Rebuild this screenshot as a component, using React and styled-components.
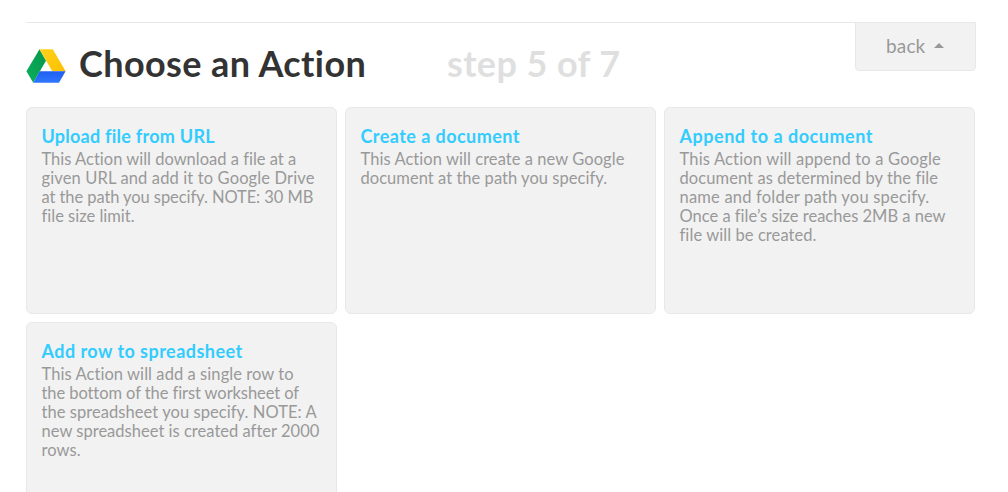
import React from 'react'
import styled, { createGlobalStyle } from 'styled-components'

const actions = [
  {
    title: 'Upload file from URL',
    tracking: 0.25,
    lines: [
      ['This Action will download a file at a', 0],
      ['given URL and add it to Google Drive', 0.13],
      ['at the path you specify. NOTE: 30 MB', -0.08],
      ['file size limit.', 0],
    ],
  },
  {
    title: 'Create a document',
    tracking: 0.44,
    lines: [
      ['This Action will create a new Google', 0.06],
      ['document at the path you specify.', 0.04],
    ],
  },
  {
    title: 'Append to a document',
    tracking: 0.53,
    lines: [
      ['This Action will append to a Google', 0.17],
      ['document as determined by the file', 0.08],
      ['name and folder path you specify.', 0.2],
      ['Once a file’s size reaches 2MB a new', 0],
      ['file will be created.', 0.08],
    ],
  },
  {
    title: 'Add row to spreadsheet',
    tracking: 0.46,
    lines: [
      ['This Action will add a single row to', 0.07],
      ['the bottom of the first worksheet of', -0.08],
      ['the spreadsheet you specify. NOTE: A', 0.06],
      ['new spreadsheet is created after 2000', 0.02],
      ['rows.', 0.1],
    ],
  },
]

function DriveLogo() {
  return (
    <Logo viewBox="0 0 40 34">
      <defs>
        <linearGradient id="green" x1="1" y1="0" x2="0" y2="1">
          <stop offset="0" stopColor="#04964a" />
          <stop offset="1" stopColor="#0cb05c" />
        </linearGradient>
        <linearGradient id="yellow" x1="0" y1="0" x2="1" y2="1">
          <stop offset="0" stopColor="#ffd21c" />
          <stop offset="1" stopColor="#fcc000" />
        </linearGradient>
        <linearGradient id="blue" x1="0" y1="0" x2="0" y2="1">
          <stop offset="0" stopColor="#1f5ff0" />
          <stop offset="1" stopColor="#2f76ff" />
        </linearGradient>
      </defs>
      <path d="M13.5 0.2 L20 11.8 L7.2 33.8 L0.4 22.2 Z" fill="url(#green)" />
      <path d="M13.5 0.2 H26.8 L39.6 22.2 H26.3 Z" fill="url(#yellow)" />
      <path d="M13.8 22.2 H39.6 L33 33.8 H7.2 Z" fill="url(#blue)" />
    </Logo>
  )
}

function App() {
  return (
    <>
      <GlobalStyle />
      <Page>
        <Header>
          <DriveLogo />
          <Heading>Choose an Action</Heading>
          <Step>step 5 of 7</Step>
          <BackButton>
            back
            <Caret />
          </BackButton>
        </Header>
        <Grid>
          {actions.map(({ title, tracking, lines }) => (
            <Card key={title}>
              <CardTitle $tracking={tracking}>{title}</CardTitle>
              <CardText>
                {lines.map(([line, spacing]) => (
                  <Line key={line} $tracking={spacing}>{line}</Line>
                ))}
              </CardText>
            </Card>
          ))}
        </Grid>
      </Page>
    </>
  )
}

const GlobalStyle = createGlobalStyle`
  * {
    box-sizing: border-box;
  }

  body {
    margin: 0;
    background: #fff;
    font-family: Lato, sans-serif;
    font-variant-ligatures: none;
  }
`

const Page = styled.main`
  height: 492px;
  padding: 22px 32px 0 26px;
  overflow: hidden;
`

const Header = styled.header`
  display: flex;
  align-items: flex-start;
  height: 85px;
  border-top: 1px solid #e8e8e8;
`

const Logo = styled.svg`
  width: 40px;
  height: 34px;
  margin-top: 26px;
`

const Heading = styled.h1`
  width: 368px;
  margin: 18px 0 0 13px;
  color: #333;
  font-size: 36px;
  font-weight: 700;
  line-height: 44px;
  letter-spacing: 0.4px;
  white-space: nowrap;
`

const Step = styled.span`
  margin-top: 18px;
  color: #dfdfdf;
  font-size: 36px;
  font-weight: 700;
  line-height: 44px;
  letter-spacing: 0.4px;
  white-space: nowrap;
`

const BackButton = styled.button`
  display: flex;
  align-items: center;
  width: 121px;
  height: 49px;
  margin: -1px 0 0 auto;
  padding: 0 0 2px 30px;
  border: 1px solid #e8e8e8;
  border-radius: 0 0 4px 4px;
  background: #f2f2f2;
  color: #999;
  font-family: inherit;
  font-size: 19px;
  letter-spacing: 0.15px;
`

const Caret = styled.i`
  margin-left: 9px;
  border: 5px solid transparent;
  border-top: 0;
  border-bottom-color: #999;
`

const Grid = styled.section`
  display: grid;
  grid-template-columns: repeat(3, 311px);
  grid-auto-rows: 207px;
  gap: 8px;
`

const Card = styled.article`
  padding: 17px 14.5px;
  border: 1px solid #e8e8e8;
  border-radius: 6px;
  background: #f2f2f2;
`

const CardTitle = styled.h2`
  margin: 0;
  color: #33ccff;
  font-size: 18px;
  font-weight: 700;
  line-height: 22px;
  letter-spacing: ${({ $tracking }) => $tracking}px;
`

const CardText = styled.p`
  margin: 3px 0 0;
  color: #999;
  font-size: 16.5px;
  line-height: 19px;
`

const Line = styled.span`
  display: block;
  letter-spacing: ${({ $tracking }) => $tracking}px;
  white-space: nowrap;
`

export default App
